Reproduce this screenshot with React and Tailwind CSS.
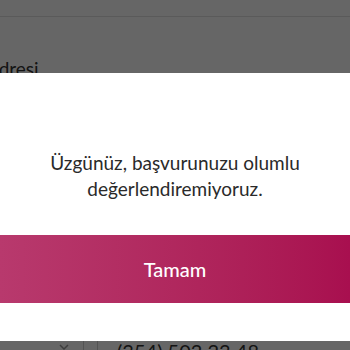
import React from 'react';

export default function App() {
  const font = { fontFamily: '"Lato", "Open Sans", sans-serif' };

  return (
    <div className="relative h-[350px] w-[350px] overflow-hidden bg-white" style={font}>
      {/* page behind the dialog */}
      <div className="flex flex-col">
        <div className="h-[17px] border-b border-[#e2e2e2] bg-white" />
        <div className="mt-[43px] -ml-[14px] text-[19px] leading-[18px] text-[#333]">Adresi</div>
        <div className="mt-[263px] flex h-[40px] items-start">
          <div className="flex w-[83px] justify-end pr-[14px] pt-[3px]">
            <svg width="10" height="8" viewBox="0 0 10 8" fill="none" stroke="#9a9a9a" strokeWidth="1.5">
              <path d="M1 1l4 4 4-4" />
            </svg>
          </div>
          <div className="h-[40px] w-px bg-[#cfcfcf]" />
          <div className="ml-[13px] h-[40px] w-px bg-[#cfcfcf]" />
          <div className="ml-[19px] -mt-[1px] text-[20px] leading-[22px] text-[#333]">(354) 502 23 48</div>
        </div>
      </div>

      {/* overlay */}
      <div className="absolute inset-0 bg-black/60" />

      {/* dialog */}
      <div className="absolute left-0 right-0 top-[73px] flex h-[268px] flex-col bg-white">
        <p className="pt-[77px] text-center text-[19px] leading-[26px] text-[#2a2a2a]">
          Üzgünüz, başvurunuzu olumlu
          <br />
          değerlendiremiyoruz.
        </p>
        <button
          type="button"
          className="mt-[33px] flex h-[68px] w-full items-center justify-center bg-gradient-to-r from-[#b8396d] to-[#a80f4f] text-[20px] font-medium text-white"
        >
          Tamam
        </button>
      </div>
    </div>
  );
}
